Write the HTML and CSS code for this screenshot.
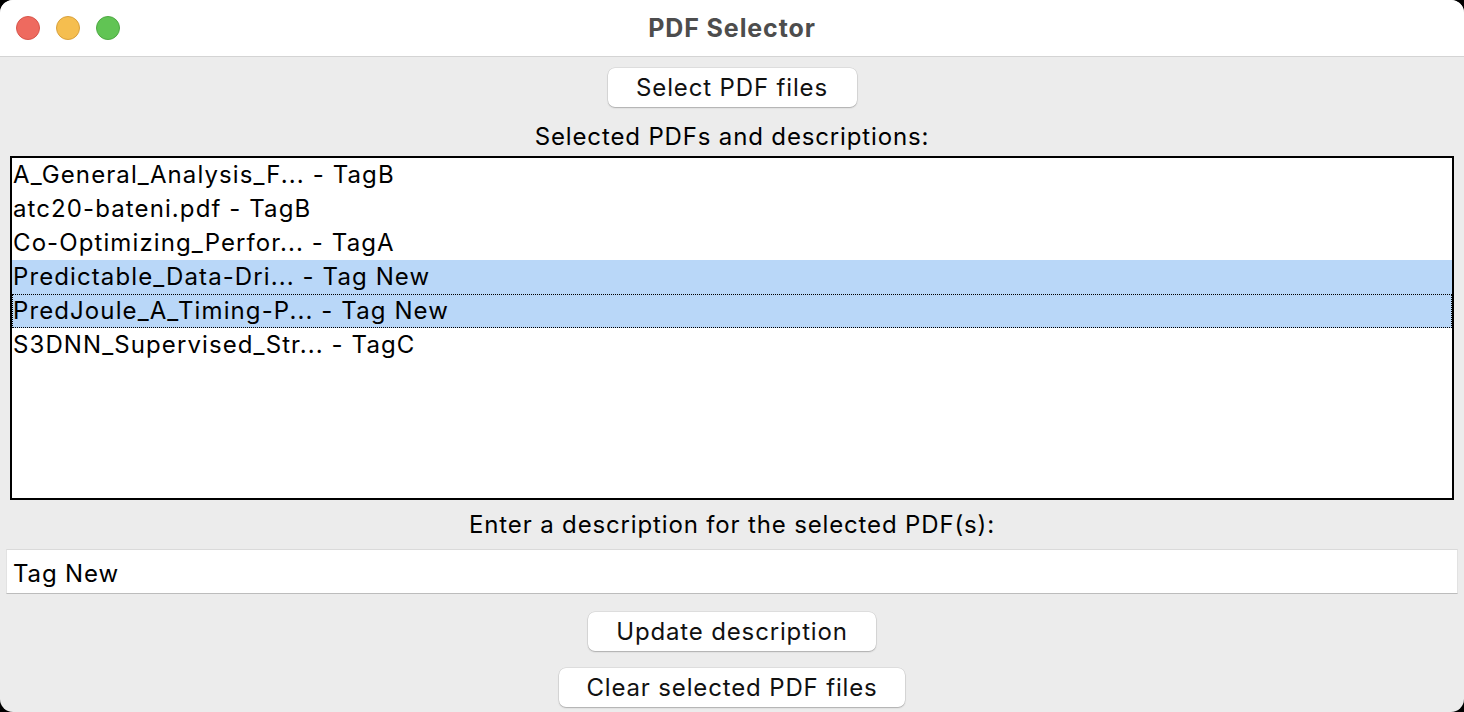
FILE: index.html
```html
<!DOCTYPE html>
<html>
<head>
<meta charset="utf-8">
<title>PDF Selector</title>
<link rel="stylesheet" href="styles.css">
</head>
<body>
<div class="window">
  <div class="titlebar">
    <div class="lights">
      <span class="light red"></span>
      <span class="light yellow"></span>
      <span class="light green"></span>
    </div>
    <div class="title">PDF Selector</div>
  </div>
  <div class="content">
    <button class="btn btn-select">Select PDF files</button>
    <div class="label label-list">Selected PDFs and descriptions:</div>
    <div class="listbox">
      <div class="row">A_General_Analysis_F... - TagB</div>
      <div class="row">atc20-bateni.pdf - TagB</div>
      <div class="row">Co-Optimizing_Perfor... - TagA</div>
      <div class="row selected">Predictable_Data-Dri... - Tag New</div>
      <div class="row selected focused">PredJoule_A_Timing-P... - Tag New</div>
      <div class="row">S3DNN_Supervised_Str... - TagC</div>
    </div>
    <div class="label label-entry">Enter a description for the selected PDF(s):</div>
    <div class="entry">Tag New</div>
    <button class="btn btn-update">Update description</button>
    <button class="btn btn-clear">Clear selected PDF files</button>
  </div>
</div>
</body>
</html>
```

FILE: styles.css
```css
* { box-sizing: border-box; }
html, body {
  margin: 0;
  padding: 0;
  background: #000;
}
body {
  font-family: Inter, "Noto Sans", "Liberation Sans", sans-serif;
  color: #000;
  letter-spacing: 0.85px;
}
.window {
  width: 1464px;
  height: 712px;
  border-radius: 13px;
  overflow: hidden;
  background: #ececec;
  display: flex;
  flex-direction: column;
}
.titlebar {
  height: 57px;
  flex: none;
  background: #fff;
  border-bottom: 1px solid #d4d4d4;
  display: flex;
  align-items: center;
  position: relative;
}
.lights {
  display: flex;
  gap: 16px;
  padding-left: 16px;
}
.light {
  width: 24px;
  height: 24px;
  border-radius: 50%;
  display: block;
}
.red { background: #ee6a5f; border: 1px solid #d8554b; }
.yellow { background: #f5be4f; border: 1px solid #d9a13c; }
.green { background: #61c454; border: 1px solid #4ea943; }
.title {
  position: absolute;
  left: 0;
  right: 0;
  text-align: center;
  font-weight: 700;
  font-size: 25px;
  letter-spacing: 0.9px;
  color: #4d4d4d;
  pointer-events: none;
}
.content {
  display: flex;
  flex-direction: column;
  align-items: center;
  padding-top: 11px;
}
.btn {
  font-family: inherit;
  font-size: 24px;
  letter-spacing: 0.85px;
  color: #111;
  background: #fff;
  border: none;
  border-radius: 7px;
  height: 39px;
  padding: 0;
  box-shadow: 0 0 0 0.5px rgba(0,0,0,0.12), 0 1px 1.5px rgba(0,0,0,0.22);
  line-height: 39px;
}
.btn-select { width: 249px; }
.btn-update { width: 288px; margin-top: 18px; }
.btn-clear { width: 346px; margin-top: 17px; }
.label {
  font-size: 24px;
  line-height: 30px;
  height: 30px;
  white-space: nowrap;
}
.label-list { margin-top: 15px; }
.listbox {
  align-self: stretch;
  margin: 4px 10px 0 10px;
  height: 344px;
  border: 2px solid #000;
  background: #fff;
  font-size: 24px;
}
.row {
  height: 34px;
  line-height: 34px;
  padding-left: 1px;
  white-space: nowrap;
  letter-spacing: 1.1px;
}
.row.selected { background: #b9d7f8; }
.row.focused {
  outline: 1px dotted #000;
  outline-offset: -1px;
}
.label-entry { margin-top: 10px; }
.entry {
  align-self: stretch;
  margin: 9px 6px 0 6px;
  height: 45px;
  background: #fff;
  border-top: 1px solid #dadada;
  border-bottom: 1px solid #bcbcbc;
  border-left: 1px solid #e2e2e2;
  border-right: 1px solid #e2e2e2;
  font-size: 24px;
  line-height: 43px;
  padding: 2px 0 0 6px;
}
```
